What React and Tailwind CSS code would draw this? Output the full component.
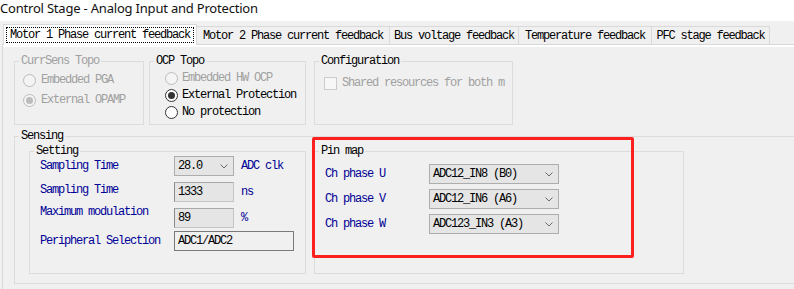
// App.jsx

const mono = { fontFamily: '"Liberation Mono", "DejaVu Sans Mono", monospace' };

function Chevron() {
  return (
    <svg width="8" height="5" viewBox="0 0 8 5" className="shrink-0">
      <polyline points="0.5,0.5 4,4 7.5,0.5" fill="none" stroke="#6a6a6a" strokeWidth="1" />
    </svg>
  );
}

function Radio({ checked, disabled }) {
  const ring = disabled ? "border-[#bcbcbc] bg-[#f4f4f4]" : "border-[#333333] bg-white";
  const dot = disabled ? "bg-[#bcbcbc]" : "bg-[#333333]";
  return (
    <span className={`w-[13px] h-[13px] rounded-full border flex items-center justify-center shrink-0 ${ring}`}>
      {checked && <span className={`w-[7px] h-[7px] rounded-full ${dot}`} />}
    </span>
  );
}

function Group({ title, disabled, className, children }) {
  return (
    <fieldset className={`border border-[#dcdcdc] min-w-0 ${className}`}>
      <legend className={`ml-[4px] px-[2px] leading-[12px] ${disabled ? "text-[#a0a0a0]" : "text-black"}`}>
        {title}
      </legend>
      {children}
    </fieldset>
  );
}

function Combo({ value, width }) {
  return (
    <div className={`${width} h-[20px] bg-[#e5e5e5] border border-[#adadad] flex items-center justify-between pl-[3px] pr-[5px] text-black`}>
      <span>{value}</span>
      <Chevron />
    </div>
  );
}

export default function App() {
  const tabs = [
    { label: "Motor 2 Phase current feedback", w: "w-[193px]" },
    { label: "Bus voltage feedback", w: "w-[129px]" },
    { label: "Temperature feedback", w: "w-[133px]" },
    { label: "PFC stage feedback", w: "w-[118px]" },
  ];

  return (
    <div className="w-[794px] h-[289px] bg-[#f0f0f0] overflow-hidden relative text-[12px] tracking-[-1.2px]" style={mono}>
      {/* title */}
      <div
        className="h-[21px] bg-white text-[13px] leading-[17px] tracking-[-0.2px] text-[#111]"
        style={{ fontFamily: '"Noto Sans", "Liberation Sans", sans-serif' }}
      >
        Control Stage - Analog Input and Protection
      </div>

      {/* tabs */}
      <div className="flex items-end h-[23px] pt-[3px] pl-[3px]">
        <div className="relative z-10 w-[194px] h-[21px] -mb-[1px] bg-white border-l border-t border-r border-[#d9d9d9] px-[2px] pt-[2px]">
          <div className="h-[16px] border border-dotted border-black flex items-center pl-[3px] text-black">
            Motor 1 Phase current feedback
          </div>
        </div>
        {tabs.map((t) => (
          <div key={t.label} className={`${t.w} h-[18px] border-t border-r border-[#d9d9d9] flex items-center justify-center text-black`}>
            {t.label}
          </div>
        ))}
      </div>

      {/* panel */}
      <div className="ml-[2px] border-t border-l border-[#d9d9d9] bg-white pt-[2px]">
        <div className="bg-[#f0f0f0] pl-[11px] pt-[8px] h-[250px]">
          {/* top row */}
          <div className="flex items-start">
            <Group title="CurrSens Topo" disabled className="w-[130px] h-[70px]">
              <div className="flex items-center gap-[5px] leading-[13px] mt-[7px] ml-[8px] text-[#a0a0a0]">
                <Radio disabled />
                <span>Embedded PGA</span>
              </div>
              <div className="flex items-center gap-[5px] leading-[13px] mt-[7px] ml-[8px] text-[#a0a0a0]">
                <Radio disabled checked />
                <span>External OPAMP</span>
              </div>
            </Group>

            <Group title="OCP Topo" className="w-[157px] h-[70px] ml-[5px]">
              <div className="flex flex-col gap-[4px] leading-[13px] mt-[5px] ml-[15px]">
                <div className="flex items-center gap-[4px] text-[#a0a0a0]">
                  <Radio disabled />
                  <span>Embedded HW OCP</span>
                </div>
                <div className="flex items-center gap-[4px] text-black">
                  <Radio checked />
                  <span>External Protection</span>
                </div>
                <div className="flex items-center gap-[4px] text-black">
                  <Radio />
                  <span>No protection</span>
                </div>
              </div>
            </Group>

            <Group title="Configuration" className="w-[199px] h-[70px] ml-[8px]">
              <div className="flex items-center gap-[5px] leading-[13px] mt-[10px] ml-[9px]">
                <span className="w-[13px] h-[13px] border border-[#cccccc] bg-[#f7f7f7] shrink-0" />
                <span className="whitespace-nowrap text-[#a0a0a0]">Shared resources for both m</span>
              </div>
            </Group>
          </div>

          {/* sensing */}
          <Group title="Sensing" className="w-[800px] h-[154px] mt-[5px]">
            <div className="flex items-start pl-[14px] mt-[3px]">
              <Group title="Setting" className="w-[277px] h-[129px]">
                <div className="pl-[10px] text-[#000096]">
                  <div className="flex items-center h-[20px] -mt-[1px]">
                    <span className="w-[134px]">Sampling Time</span>
                    <Combo value="28.0" width="w-[60px]" />
                    <span className="ml-[7px]">ADC clk</span>
                  </div>
                  <div className="flex items-center h-[20px] mt-[6px]">
                    <span className="w-[134px] -mt-[4px]">Sampling Time</span>
                    <div className="w-[60px] h-[20px] bg-[#e5e5e5] border border-[#c4c4c4] border-l-[#8a8a8a] border-t-[#a8a8a8] pl-[3px] leading-[18px] text-black">
                      1333
                    </div>
                    <span className="ml-[7px]">ns</span>
                  </div>
                  <div className="flex items-center h-[20px] mt-[6px]">
                    <span className="w-[134px] -mt-[12px]">Maximum modulation</span>
                    <div className="w-[60px] h-[20px] bg-[#e5e5e5] border border-[#c4c4c4] border-l-[#8a8a8a] border-t-[#a8a8a8] pl-[3px] leading-[18px] text-black">
                      89
                    </div>
                    <span className="ml-[7px]">%</span>
                  </div>
                  <div className="flex items-center h-[20px] mt-[3px]">
                    <span className="w-[134px]">Peripheral Selection</span>
                    <div className="w-[120px] h-[20px] border border-[#7a7a7a] pl-[3px] leading-[18px] text-black">
                      ADC1/ADC2
                    </div>
                  </div>
                </div>
              </Group>

              <Group title="Pin map" className="w-[370px] h-[129px] ml-[8px]">
                <div className="pl-[10px] mt-[7px] flex flex-col gap-[5px] text-[#000096]">
                  {[
                    ["Ch phase U", "ADC12_IN8 (B0)"],
                    ["Ch phase V", "ADC12_IN6 (A6)"],
                    ["Ch phase W", "ADC123_IN3 (A3)"],
                  ].map(([l, v]) => (
                    <div key={l} className="flex items-center h-[20px]">
                      <span className="w-[104px]">{l}</span>
                      <Combo value={v} width="w-[130px]" />
                    </div>
                  ))}
                </div>
              </Group>
            </div>
          </Group>
        </div>
      </div>

      {/* red highlight annotation */}
      <div className="absolute left-[312px] top-[137px] w-[322px] h-[121px] border-[3px] border-[#ff1f1f] rounded-[2px] pointer-events-none" />
    </div>
  );
}
